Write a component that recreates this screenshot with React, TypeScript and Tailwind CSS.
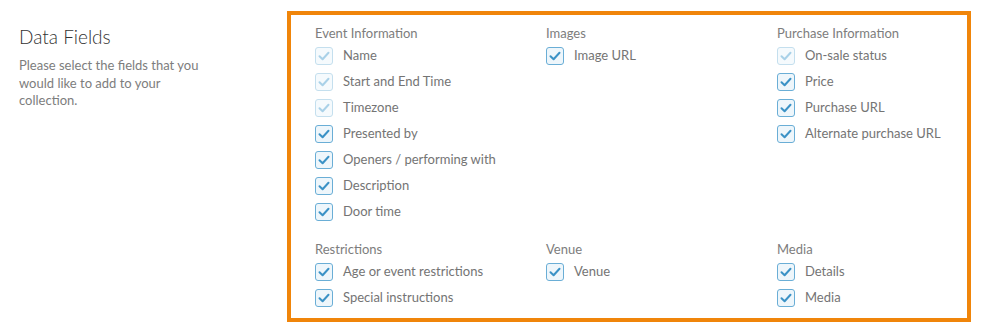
import React from "react";

type Item = { label: string; disabled?: boolean };
type Section = { title: string; items: Item[] };

const row1: Section[] = [
  {
    title: "Event Information",
    items: [
      { label: "Name", disabled: true },
      { label: "Start and End Time", disabled: true },
      { label: "Timezone", disabled: true },
      { label: "Presented by" },
      { label: "Openers / performing with" },
      { label: "Description" },
      { label: "Door time" },
    ],
  },
  { title: "Images", items: [{ label: "Image URL" }] },
  {
    title: "Purchase Information",
    items: [
      { label: "On-sale status", disabled: true },
      { label: "Price" },
      { label: "Purchase URL" },
      { label: "Alternate purchase URL" },
    ],
  },
];

const row2: Section[] = [
  {
    title: "Restrictions",
    items: [{ label: "Age or event restrictions" }, { label: "Special instructions" }],
  },
  { title: "Venue", items: [{ label: "Venue" }] },
  { title: "Media", items: [{ label: "Details" }, { label: "Media" }] },
];

function Check({ disabled }: { disabled?: boolean }) {
  return (
    <span
      className={
        "flex h-[18px] w-[18px] shrink-0 items-center justify-center rounded-[3px] border " +
        (disabled ? "border-[#c4dfee] bg-[#f5fafd]" : "border-[#6aaed6] bg-[#eef6fb]")
      }
    >
      <svg width="12" height="10" viewBox="0 0 12 10" fill="none">
        <path
          d="M1.5 5.2 L4.6 8.2 L10.5 1.8"
          stroke={disabled ? "#a9d1e8" : "#3b92c6"}
          strokeWidth="2"
          strokeLinecap="round"
          strokeLinejoin="round"
        />
      </svg>
    </span>
  );
}

function SectionBlock({ s }: { s: Section }) {
  return (
    <div className="flex flex-col">
      <div className="h-[19px] text-[13px] leading-[18px] text-[#7d7d7d]">{s.title}</div>
      {s.items.map((it) => (
        <div key={it.label} className="flex h-[26px] items-center gap-[10px]">
          <Check disabled={it.disabled} />
          <span className="text-[13px] text-[#747474]">{it.label}</span>
        </div>
      ))}
    </div>
  );
}

export default function App() {
  return (
    <div
      className="flex h-[333px] w-[990px] bg-white"
      style={{ fontFamily: "Lato, 'Open Sans', sans-serif" }}
    >
      <div className="w-[287px] pl-[19px] pt-[25px]">
        <h2 className="text-[19px] font-light leading-[24px] text-[#333]">Data Fields</h2>
        <p className="mt-[8px] w-[200px] text-[13px] leading-[17.5px] text-[#7d7d7d]">
          Please select the fields that you would like to add to your collection.
        </p>
      </div>
      <div className="mt-[11px] h-[311px] w-[684px] border-4 border-[#f0850a] pl-[24px] pt-[9px]">
        <div className="grid grid-cols-[231px_231px_1fr]">
          {row1.map((s) => (
            <SectionBlock key={s.title} s={s} />
          ))}
        </div>
        <div className="mt-[15px] grid grid-cols-[231px_231px_1fr]">
          {row2.map((s) => (
            <SectionBlock key={s.title} s={s} />
          ))}
        </div>
      </div>
    </div>
  );
}
